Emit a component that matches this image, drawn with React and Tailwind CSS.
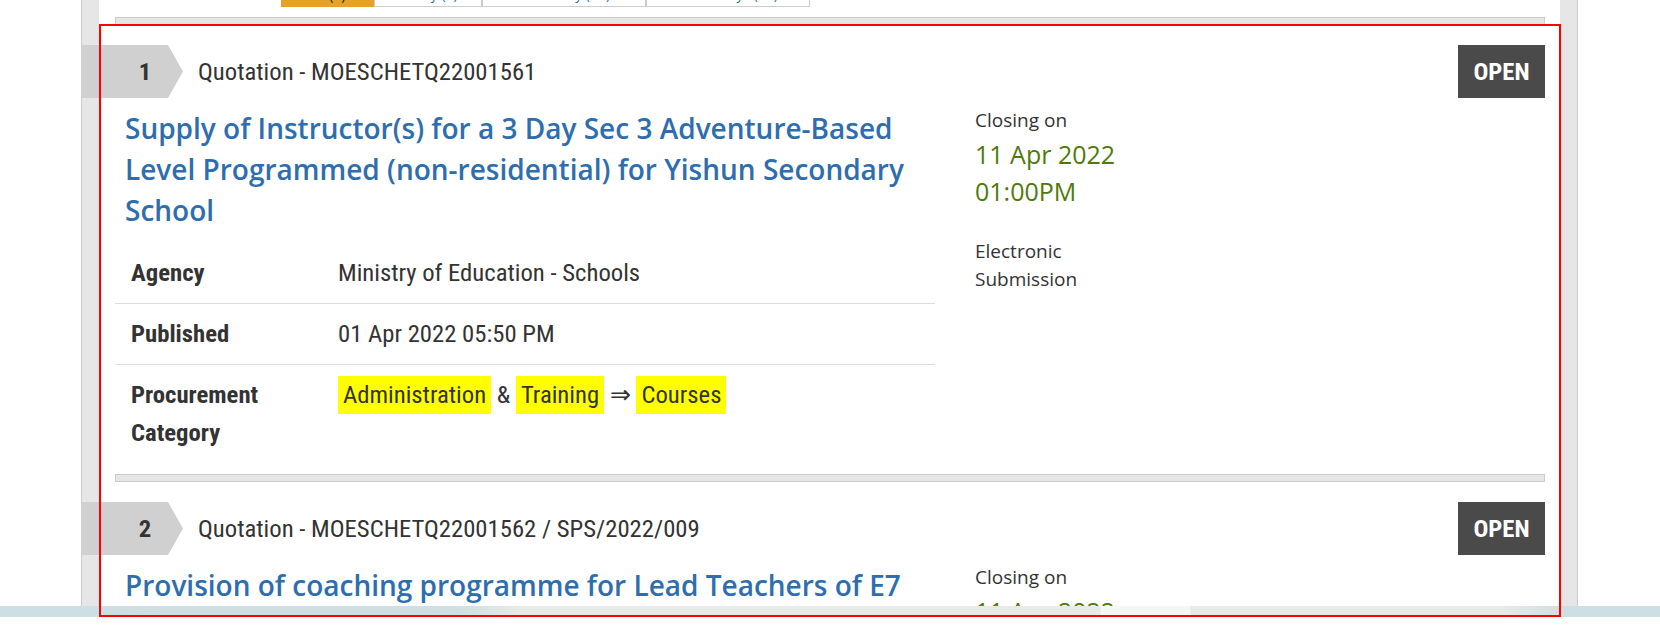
import React from "react";

const cond = "font-['Roboto_Condensed','Liberation_Sans_Narrow',Roboto,sans-serif] font-stretch-condensed";
const open = "font-['Open_Sans','Noto_Sans',sans-serif]";

function Divider({ className = "" }) {
  return <div className={`h-[8px] border border-[#cccccc] bg-[#e6e6e6] ${className}`} />;
}

function Header({ n, code }) {
  return (
    <div className="flex h-[53px] items-center">
      <div className="-ml-[34px] flex h-[53px] w-[102px] shrink-0 items-center justify-center bg-[#d0d0d0] pl-[26px] [clip-path:polygon(0_0,87px_0,102px_50%,87px_100%,0_100%)]">
        <span className={`${cond} text-[24.7px] font-bold text-[#333333]`}>{n}</span>
      </div>
      <div className={`${cond} ml-[15px] flex-1 text-[24.7px] text-[#333333]`}>{code}</div>
      <div className={`${cond} flex h-[53px] w-[87px] items-center justify-center bg-[#4a4a4a] text-[24.7px] font-bold text-white`}>
        OPEN
      </div>
    </div>
  );
}

function Row({ label, children, last }) {
  return (
    <div className={`flex py-[11px] ${last ? "" : "border-b border-[#dddddd]"}`}>
      <div className={`${cond} w-[223px] shrink-0 pl-[16px] text-[24.7px] font-bold leading-[38px] text-[#333333]`}>{label}</div>
      <div className={`${cond} flex-1 text-[24.7px] leading-[38px] text-[#333333]`}>{children}</div>
    </div>
  );
}

function Hl({ children }) {
  return <span className="inline-block bg-[#ffff00] px-[5px]">{children}</span>;
}

function Card({ n, code, title }) {
  return (
    <div>
      <div className="mt-[20px]">
        <Header n={n} code={code} />
      </div>
      <div className="mt-[10px] flex">
        <div className="w-[820px] shrink-0">
          <div className={`${open} pl-[10px] pr-[10px] text-[28px] font-semibold leading-[41px] text-[#2e6eae]`}>{title}</div>
          <div className="mt-[12px]">
            <Row label="Agency">Ministry of Education - Schools</Row>
            <Row label="Published">01 Apr 2022 05:50 PM</Row>
            <Row label={<span>Procurement<br />Category</span>} last>
              <Hl>Administration</Hl> &amp; <Hl>Training</Hl> ⇒ <Hl>Courses</Hl>
            </Row>
          </div>
        </div>
        <div className={`${open} ml-[40px]`}>
          <div className="text-[19px] leading-[24px] text-[#333333]">Closing on</div>
          <div className="mt-[4px] text-[25px] leading-[37px] text-[#4f7a0a]">11 Apr 2022</div>
          <div className="text-[25px] leading-[37px] text-[#4f7a0a]">01:00PM</div>
          <div className="mt-[27px] text-[19px] leading-[28px] text-[#333333]">
            Electronic
            <br />
            Submission
          </div>
        </div>
      </div>
    </div>
  );
}

function Tab({ w, active, text }) {
  return (
    <div
      className={`flex h-[7px] items-end justify-center overflow-hidden ${
        active ? "bg-[#e8a127]" : "border-x border-b border-[#cccccc] bg-white"
      }`}
      style={{ width: w }}
    >
      <span className={`mb-[4px] font-['Open_Sans',sans-serif] text-[14px] leading-[16px] ${active ? "text-[#222222]" : "text-[#2e6eae]"}`}>
        {text}
      </span>
    </div>
  );
}

export default function App() {
  return (
    <div className="relative h-[643px] w-[1660px] overflow-hidden bg-white">
      <div className="h-[606px] overflow-hidden">
        <div className="ml-[81px] h-full w-[1497px] border-x border-[#cccccc] bg-[#e6e6e6] px-[17px]">
          <div className="h-full bg-white pl-[16px] pr-[15px]">
            <div className="ml-[166px] flex">
              <Tab w={93} active text="All (2)" />
              <Tab w={108} text="Today (2)" />
              <Tab w={164} text="Yesterday (12)" />
              <Tab w={164} text="Last 7 days (45)" />
            </div>
            <Divider className="mt-[10px]" />
            <Card
              n="1"
              code="Quotation - MOESCHETQ22001561"
              title="Supply of Instructor(s) for a 3 Day Sec 3 Adventure-Based Level Programmed (non-residential) for Yishun Secondary School"
            />
            <Divider className="mt-[11px]" />
            <Card
              n="2"
              code="Quotation - MOESCHETQ22001562 / SPS/2022/009"
              title="Provision of coaching programme for Lead Teachers of E7 Schools in Teaching and Learning"
            />
          </div>
        </div>
      </div>
      <div className="relative h-[11px] bg-[linear-gradient(to_right,#cbdfe4_0px,#cfe0e4_460px,#e9e9e9_520px,#e9e9e9_1100px,#f6f6f6_1101px,#f6f6f6_1190px,#e9e9e9_1191px,#e9e9e9_1500px,#cbdfe4_1570px,#cbdfe4_1660px)]" />
      <div className="pointer-events-none absolute left-[99px] top-[24px] h-[593px] w-[1462px] border-2 border-[#ff0000]" />
    </div>
  );
}
